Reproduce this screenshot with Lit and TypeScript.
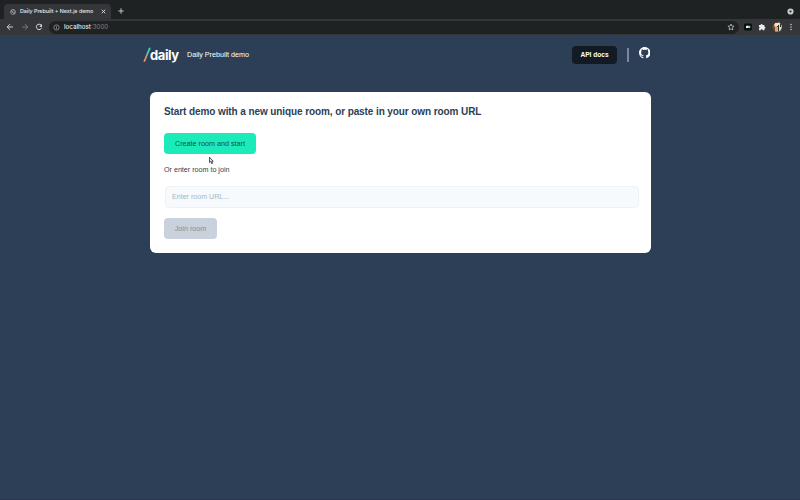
import { LitElement, html, css } from "lit";
import { customElement } from "lit/decorators.js";

@customElement("browser-chrome")
class BrowserChrome extends LitElement {
  static styles = css`
    :host { display: block; height: 35px; background: #1f2223; font-family: Inter, "Liberation Sans", sans-serif; color: #e8eaed; }
    * { box-sizing: border-box; }
    svg { display: block; flex: none; }
    .tabs { display: flex; height: 19px; padding: 4px 6px 0 4px; align-items: flex-start; }
    .tab { display: flex; align-items: center; width: 107px; height: 15px; padding: 0 5px 0 6px; background: #35363a; border-radius: 4px 4px 0 0; }
    .title { margin-left: 4px; flex: 1; font-size: 5.3px; font-weight: 500; white-space: nowrap; line-height: 15px; }
    .plus { margin: 4px 0 0 7px; }
    .grow { flex: 1; }
    .dot { margin-top: 4px; }
    .bar { display: flex; align-items: center; height: 16px; background: #35363a; padding: 0 7.5px 0 6px; }
    .nav { display: flex; gap: 6.5px; }
    .address { display: flex; flex: 1; align-items: center; height: 13px; margin: 0 5.5px 0 6px; padding: 0 4px; border-radius: 7px; background: #1f2223; }
    .url { margin-left: 4px; flex: 1; font-size: 6.2px; line-height: 12px; font-weight: 500; }
    .port { color: #80858b; font-weight: 400; }
    .tools { display: flex; align-items: center; gap: 6px; }
    .avatar { margin: 0 1px 0 -.5px; }
  `;
  render() {
    return html`
      <div class="tabs">
        <div class="tab">
          <svg width="6" height="6" viewBox="0 0 12 12"><circle cx="6" cy="6" r="5" fill="none" stroke="#9aa0a6" stroke-width="1.5"/><path d="M2 3l3 1 1 2-2 2M6 1l1 2 3 1M7 7l3 0-2 3z" fill="#9aa0a6" stroke="#9aa0a6"/></svg>
          <span class="title">Daily Prebuilt + Next.js demo</span>
          <svg width="5" height="5" viewBox="0 0 10 10"><path d="M1.5 1.5l7 7M8.5 1.5l-7 7" stroke="#e8eaed" stroke-width="1.8"/></svg>
        </div>
        <svg class="plus" width="6" height="6" viewBox="0 0 6 6"><path d="M3 .3v5.4M.3 3h5.4" stroke="#d0d2d5" stroke-width=".9"/></svg>
        <span class="grow"></span>
        <svg class="dot" width="7" height="7" viewBox="0 0 7 7"><circle cx="3.5" cy="3.5" r="3.1" fill="#c6c8ca"/><path d="M2 2.7h3L3.5 4.7z" fill="#202124"/></svg>
      </div>
      <div class="bar">
        <div class="nav">
          <svg width="8" height="8" viewBox="0 0 8 8"><path d="M7 4H1.3M4 1.2L1.2 4 4 6.8" fill="none" stroke="#dfe1e4" stroke-width=".9"/></svg>
          <svg width="8" height="8" viewBox="0 0 8 8"><path d="M1 4h5.7M4 1.2L6.8 4 4 6.8" fill="none" stroke="#7c8087" stroke-width=".9"/></svg>
          <svg width="8" height="8" viewBox="0 0 8 8"><path d="M6.2 2.2A2.7 2.7 0 1 0 6.7 4.6" fill="none" stroke="#e8eaed" stroke-width=".9"/><path d="M7 .9v2.8H4.2z" fill="#e8eaed"/></svg>
        </div>
        <div class="address">
          <svg width="7" height="7" viewBox="0 0 7 7"><circle cx="3.5" cy="3.5" r="2.6" fill="none" stroke="#a5a9ae" stroke-width=".7"/><path d="M3.5 3.1v1.9M3.5 1.9v.7" stroke="#a5a9ae" stroke-width=".7"/></svg>
          <span class="url">localhost<span class="port">:3000</span></span>
          <svg width="8" height="8" viewBox="0 0 8 8"><path d="M4 1l.9 2 2.2.2-1.7 1.5.5 2.2L4 5.8 2.1 6.9l.5-2.2L.9 3.2l2.2-.2z" fill="none" stroke="#d0d2d5" stroke-width=".7"/></svg>
        </div>
        <div class="tools">
          <svg width="8" height="8" viewBox="0 0 8 8"><rect width="8" height="7" y=".5" rx="1.4" fill="#07110f"/><rect x="2" y="2.8" width="2.7" height="2.3" rx=".4" fill="#fff"/><path d="M4.7 2.8h1.6v2.3H4.7z" fill="#8ec9b7"/></svg>
          <svg width="8" height="8" viewBox="0 0 8 8"><path d="M1 2h1.6a1 1 0 1 1 2 0H6.4v1.8a1 1 0 1 1 0 2V7.2H4.7a1 1 0 1 0-2 0H1V5.6a1 1 0 0 0 0-1.8z" fill="#e8eaed"/></svg>
          <svg class="avatar" width="10" height="10" viewBox="0 0 10 10"><clipPath id="a"><circle cx="5" cy="5" r="4.8"/></clipPath><g clip-path="url(#a)"><path fill="#594b3b" d="M0 0h10v10H0z"/><path fill="#dfd9ce" d="M6 0h4v10H6z"/><path fill="#e0a071" d="M2 2h3v3H2zM3 5h3v5H3z"/><path fill="#f3e3cb" d="M3 1h3v3H3z"/><path fill="#28302b" d="M6 3h1v7H6zM8 0h1v5H8z"/></g></svg>
          <svg width="4" height="8" viewBox="0 0 4 8"><g fill="#e8eaed"><circle cx="2" cy="1.5" r=".65"/><circle cx="2" cy="4" r=".65"/><circle cx="2" cy="6.5" r=".65"/></g></svg>
        </div>
      </div>`;
  }
}

@customElement("app-root")
class AppRoot extends LitElement {
  static styles = css`
    :host { display: flex; flex-direction: column; position: relative; height: 500px; overflow: hidden; background: #2c3f57; font-family: "Liberation Sans", Arial, sans-serif; color: #2b3f56; }
    * { box-sizing: border-box; }
    svg { display: block; flex: none; }
    header { display: flex; align-items: center; height: 40px; margin: 0 150px 0 143px; color: #fff; }
    .slash { margin-right: -1px; }
    .logo { font: 700 13px/20px Inter, sans-serif; letter-spacing: -.4px; width: 37px; }
    .tagline { font-size: 7.15px; line-height: 10px; flex: 1; }
    .docs { width: 45px; height: 18px; border: 0; padding: 0; border-radius: 4px; background: #121a24; color: #fff; font: 700 6.6px/18px "Liberation Sans", sans-serif; text-align: center; }
    .rule { width: 1.5px; height: 14px; margin: 0 10px; background: #7b8899; }
    .github { margin-bottom: 4px; }
    main { width: 500.5px; height: 161px; margin: 17px 0 0 150px; padding: 12px 10px 0 14px; background: #fff; border-radius: 6px; }
    h1 { margin: 0; font-size: 10px; line-height: 15px; letter-spacing: -.095px; white-space: nowrap; }
    .btn { display: block; height: 21px; border: 0; border-radius: 4px; padding: 0; font: 7.2px/21px "Liberation Sans", sans-serif; color: #1f4a58; text-align: center; }
    .create { width: 92px; margin-top: 14px; background: #1bebb9; }
    .or { margin: 11px 0; font-size: 7.15px; line-height: 10px; }
    .field { display: block; width: 474px; height: 22px; margin-left: 1px; padding: 0 6px; border: 1px solid #eef2f6; border-radius: 4px; background: #f7fafc; font: 7.1px "Liberation Sans", sans-serif; }
    .field::placeholder { color: #a9b3bf; opacity: 1; }
    .join { width: 53px; margin-top: 10px; background: #c8d1dc; color: #8490a0; }
    .cursor { position: absolute; left: 208px; top: 156px; }
    footer { height: 1px; margin-top: auto; background: #2c3550; }
  `;
  render() {
    return html`
      <browser-chrome></browser-chrome>
      <header>
        <svg class="slash" width="8" height="16" viewBox="0 0 8 16"><defs><linearGradient id="g" x1="0" y1="0" x2="0" y2="1"><stop offset="0" stop-color="#1bebb9"/><stop offset=".45" stop-color="#75bfa0"/><stop offset=".6" stop-color="#d69a67"/><stop offset="1" stop-color="#ff9254"/></linearGradient></defs><path d="M6 .8h1.8L2.1 14.8H.3z" fill="url(#g)"/></svg>
        <span class="logo">daily</span>
        <span class="tagline">Daily Prebuilt demo</span>
        <button class="docs">API docs</button>
        <span class="rule"></span>
        <svg class="github" width="11.5" height="11.5" viewBox="0 0 16 16"><path fill="#fff" d="M8 0C3.58 0 0 3.58 0 8c0 3.54 2.29 6.53 5.47 7.59.4.07.55-.17.55-.38 0-.19-.01-.82-.01-1.49-2.01.37-2.53-.49-2.69-.94-.09-.23-.48-.94-.82-1.13-.28-.15-.68-.52-.01-.53.63-.01 1.08.58 1.23.82.72 1.21 1.87.87 2.33.66.07-.52.28-.87.51-1.07-1.78-.2-3.64-.89-3.64-3.95 0-.87.31-1.59.82-2.15-.08-.2-.36-1.02.08-2.12 0 0 .67-.21 2.2.82A7.7 7.7 0 0 1 8 3.86c.68 0 1.36.09 2 .27 1.53-1.04 2.2-.82 2.2-.82.44 1.1.16 1.92.08 2.12.51.56.82 1.27.82 2.15 0 3.07-1.87 3.75-3.65 3.95.29.25.54.73.54 1.48 0 1.07-.01 1.93-.01 2.2 0 .21.15.46.55.38A8 8 0 0 0 16 8c0-4.42-3.58-8-8-8z"/></svg>
      </header>
      <main>
        <h1>Start demo with a new unique room, or paste in your own room URL</h1>
        <button class="btn create">Create room and start</button>
        <p class="or">Or enter room to join</p>
        <input class="field" placeholder="Enter room URL...">
        <button class="btn join">Join room</button>
      </main>
      <svg class="cursor" width="6" height="9" viewBox="0 0 6 9"><path d="M1.5 1.2v5.4l1.2-1.1 1 2.2.9-.4-.9-2.1h1.5z" fill="#e4e6ea" stroke="#2b2f38" stroke-width=".8"/></svg>
      <footer></footer>`;
  }
}
